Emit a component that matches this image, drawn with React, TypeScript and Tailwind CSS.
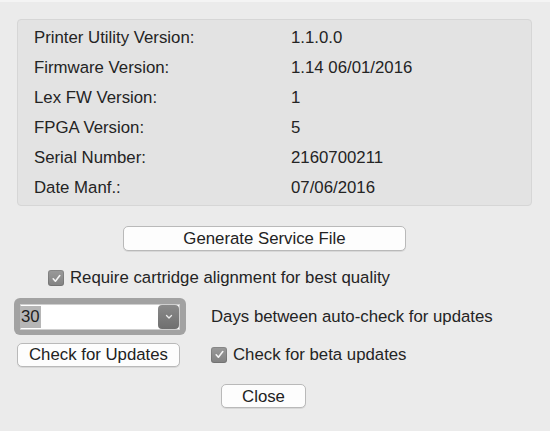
import React from "react";

const rows: [string, string][] = [
  ["Printer Utility Version:", "1.1.0.0"],
  ["Firmware Version:", "1.14 06/01/2016"],
  ["Lex FW Version:", "1"],
  ["FPGA Version:", "5"],
  ["Serial Number:", "2160700211"],
  ["Date Manf.:", "07/06/2016"],
];

function Check() {
  return (
    <span className="flex h-[16px] w-[16px] shrink-0 items-center justify-center rounded-[3px] bg-gradient-to-b from-[#9a9a9a] to-[#828282] shadow-[inset_0_0_0_1px_rgba(0,0,0,0.12)]">
      <svg width="11" height="11" viewBox="0 0 11 11" fill="none">
        <path d="M2.2 5.8 L4.4 8.2 L8.8 2.6" stroke="#f4f4f4" strokeWidth="1.6" strokeLinecap="round" strokeLinejoin="round" />
      </svg>
    </span>
  );
}

function Btn({ children, className }: { children: React.ReactNode; className: string }) {
  return (
    <div
      className={
        "flex items-center justify-center rounded-[5px] border border-[#b9b9b9] bg-[#fdfdfd] shadow-[0_1px_0_rgba(0,0,0,0.08)] text-[#222222] " +
        className
      }
    >
      {children}
    </div>
  );
}

export default function App() {
  return (
    <div
      className="flex h-[431px] w-[550px] flex-col border-t-2 border-[#f4f4f4] bg-[#ebebeb] text-[16.8px] text-[#242424]"
      style={{ fontFamily: '"Liberation Sans", Arial, sans-serif' }}
    >
      <div className="ml-[17px] mt-[17px] flex h-[187px] w-[515px] flex-col rounded-[4px] border border-[#d6d6d6] bg-[#e3e3e3] pl-[16px] pt-[3px]">
        {rows.map(([k, v]) => (
          <div key={k} className="flex h-[30px] items-center leading-none">
            <span className="w-[257px]">{k}</span>
            <span>{v}</span>
          </div>
        ))}
      </div>

      <Btn className="ml-[123px] mt-[20px] h-[25px] w-[283px]">Generate Service File</Btn>

      <div className="ml-[48px] mt-[18px] flex h-[18px] items-center gap-[6px]">
        <Check />
        <span>Require cartridge alignment for best quality</span>
      </div>

      <div className="ml-[14px] mt-[11px] flex items-center">
        <div className="flex h-[37px] w-[172px] items-center rounded-[6px] bg-[#a2a2a2] px-[6px] pb-[5px] pt-[6px]">
          <div className="flex h-[26px] w-full items-center bg-white pr-[1px] shadow-[inset_0_0_0_1px_#cfcfcf]">
            <span className="flex h-[22px] items-center bg-[#b6b6b6] px-[1px] leading-none text-[#1e1e1e]">30</span>
            <div className="flex-1" />
            <div className="flex h-[24px] w-[21px] items-center justify-center rounded-[4px] bg-gradient-to-b from-[#8a8a8a] to-[#6f6f6f]">
              <svg width="8" height="6" viewBox="0 0 8 6" fill="none">
                <path d="M1.5 1.5 L4 4 L6.5 1.5" stroke="#ededed" strokeWidth="1.3" strokeLinecap="round" strokeLinejoin="round" />
              </svg>
            </div>
          </div>
        </div>
        <span className="ml-[25px]">Days between auto-check for updates</span>
      </div>

      <div className="ml-[17px] mt-[7px] flex items-center">
        <Btn className="h-[24px] w-[163px]">Check for Updates</Btn>
        <div className="ml-[31px] flex items-center gap-[6px]">
          <Check />
          <span>Check for beta updates</span>
        </div>
      </div>

      <Btn className="ml-[221px] mt-[17px] h-[24px] w-[85px]">Close</Btn>
    </div>
  );
}
